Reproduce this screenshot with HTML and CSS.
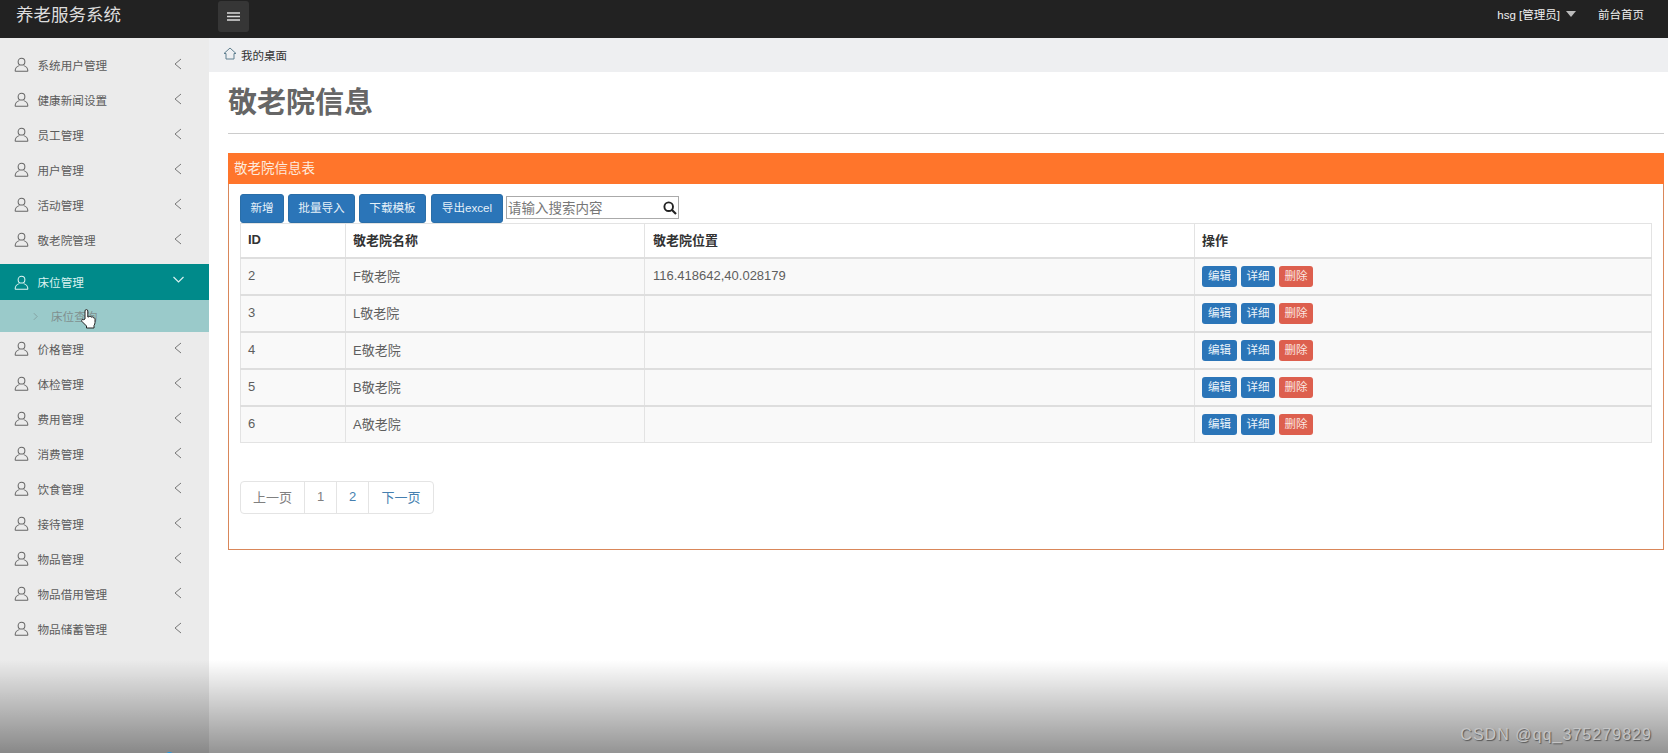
FILE: index.html
```html
<!DOCTYPE html>
<html lang="zh">
<head>
<meta charset="utf-8">
<title>养老服务系统</title>
<link rel="stylesheet" href="styles.css">
</head>
<body>
<svg class="sprites" width="0" height="0">
  <symbol id="user" viewBox="0 0 16 16"><circle cx="8" cy="5" r="3.6" fill="none" stroke="currentColor" stroke-width="1.1"/><path d="M1.2 15.2c0-3.6 2.4-5.4 4.4-6M14.8 15.2c0-3.6-2.4-5.4-4.4-6M1.2 15.2h13.6" fill="none" stroke="currentColor" stroke-width="1.1"/></symbol>
  <symbol id="left" viewBox="0 0 8 12"><path d="M7 1L1 6l6 5" fill="none" stroke="currentColor" stroke-width="1"/></symbol>
</svg>
<div class="app">
  <header class="topbar">
    <div class="brand">养老服务系统</div>
    <button class="toggle" type="button" aria-label="菜单">
      <svg width="13" height="9" viewBox="0 0 13 9"><path d="M0 1h13M0 4.500h13M0 8h13" stroke="#ddd" stroke-width="1.400"/></svg>
    </button>
    <div class="top-right">
      <span class="who">hsg [管理员]</span><span class="caret"></span>
      <span class="home-link">前台首页</span>
    </div>
  </header>
  <aside class="sidebar">
    <ul class="menu">
      <li class="item"><svg class="uicon"><use href="#user"/></svg><span class="label">系统用户管理</span><svg class="chev"><use href="#left"/></svg></li>
      <li class="item"><svg class="uicon"><use href="#user"/></svg><span class="label">健康新闻设置</span><svg class="chev"><use href="#left"/></svg></li>
      <li class="item"><svg class="uicon"><use href="#user"/></svg><span class="label">员工管理</span><svg class="chev"><use href="#left"/></svg></li>
      <li class="item"><svg class="uicon"><use href="#user"/></svg><span class="label">用户管理</span><svg class="chev"><use href="#left"/></svg></li>
      <li class="item"><svg class="uicon"><use href="#user"/></svg><span class="label">活动管理</span><svg class="chev"><use href="#left"/></svg></li>
      <li class="item"><svg class="uicon"><use href="#user"/></svg><span class="label">敬老院管理</span><svg class="chev"><use href="#left"/></svg></li>
      <li class="item active"><svg class="uicon"><use href="#user"/></svg><span class="label">床位管理</span><svg class="chev-down" viewBox="0 0 12 8"><path d="M1 1l5 5 5-5" fill="none" stroke="currentColor" stroke-width="1.2"/></svg></li>
      <li class="sub">
        <svg class="sub-chev" viewBox="0 0 6 10"><path d="M1 1l4 4-4 4" fill="none" stroke="currentColor" stroke-width="1"/></svg><span>床位查询</span>
        <svg class="hand" viewBox="0 0 16 22"><path d="M5 11V3a1.4 1.4 0 0 1 2.8 0v6l1 0a1.3 1.3 0 0 1 2.4.3 1.3 1.3 0 0 1 2.3.6c1-.2 1.5.5 1.5 1.4v3.2c0 1.200-.4 2-1 3v2.500H6.500V18L2 13.500c-1-1.200.4-2.700 1.700-1.800z" fill="#fff" stroke="#222" stroke-width="1"/></svg>
      </li>
      <li class="item"><svg class="uicon"><use href="#user"/></svg><span class="label">价格管理</span><svg class="chev"><use href="#left"/></svg></li>
      <li class="item"><svg class="uicon"><use href="#user"/></svg><span class="label">体检管理</span><svg class="chev"><use href="#left"/></svg></li>
      <li class="item"><svg class="uicon"><use href="#user"/></svg><span class="label">费用管理</span><svg class="chev"><use href="#left"/></svg></li>
      <li class="item"><svg class="uicon"><use href="#user"/></svg><span class="label">消费管理</span><svg class="chev"><use href="#left"/></svg></li>
      <li class="item"><svg class="uicon"><use href="#user"/></svg><span class="label">饮食管理</span><svg class="chev"><use href="#left"/></svg></li>
      <li class="item"><svg class="uicon"><use href="#user"/></svg><span class="label">接待管理</span><svg class="chev"><use href="#left"/></svg></li>
      <li class="item"><svg class="uicon"><use href="#user"/></svg><span class="label">物品管理</span><svg class="chev"><use href="#left"/></svg></li>
      <li class="item"><svg class="uicon"><use href="#user"/></svg><span class="label">物品借用管理</span><svg class="chev"><use href="#left"/></svg></li>
      <li class="item"><svg class="uicon"><use href="#user"/></svg><span class="label">物品储蓄管理</span><svg class="chev"><use href="#left"/></svg></li>
    </ul>
  </aside>
  <main class="main">
    <div class="crumb">
      <svg class="house" viewBox="0 0 14 13"><path d="M7 1L1 6.500h2V12h8V6.500h2z" fill="none" stroke="#5f7f8f" stroke-width="1"/></svg>
      <span>我的桌面</span>
    </div>
    <div class="content">
      <h1 class="title">敬老院信息</h1>
      <section class="panel">
        <div class="panel-head">敬老院信息表</div>
        <div class="panel-body">
          <div class="tools">
            <button class="btn" type="button">新增</button>
            <button class="btn" type="button">批量导入</button>
            <button class="btn" type="button">下载模板</button>
            <button class="btn" type="button">导出excel</button>
            <div class="search">
              <span class="ph">请输入搜索内容</span>
              <svg class="glass" viewBox="0 0 14 14"><circle cx="5.700" cy="5.700" r="4.300" fill="none" stroke="#222" stroke-width="1.900"/><path d="M9 9l4 4" stroke="#222" stroke-width="2.200"/></svg>
            </div>
          </div>
          <table class="grid">
            <colgroup><col class="c1"><col class="c2"><col class="c3"><col></colgroup>
            <thead><tr><th>ID</th><th>敬老院名称</th><th>敬老院位置</th><th>操作</th></tr></thead>
            <tbody>
              <tr><td>2</td><td>F敬老院</td><td>116.418642,40.028179</td><td><span class="mini">编辑</span><span class="mini">详细</span><span class="mini red">删除</span></td></tr>
              <tr><td>3</td><td>L敬老院</td><td></td><td><span class="mini">编辑</span><span class="mini">详细</span><span class="mini red">删除</span></td></tr>
              <tr><td>4</td><td>E敬老院</td><td></td><td><span class="mini">编辑</span><span class="mini">详细</span><span class="mini red">删除</span></td></tr>
              <tr><td>5</td><td>B敬老院</td><td></td><td><span class="mini">编辑</span><span class="mini">详细</span><span class="mini red">删除</span></td></tr>
              <tr><td>6</td><td>A敬老院</td><td></td><td><span class="mini">编辑</span><span class="mini">详细</span><span class="mini red">删除</span></td></tr>
            </tbody>
          </table>
          <div class="pager">
            <span class="pg pg-prev">上一页</span><span class="pg pg-num">1</span><span class="pg pg-num link">2</span><span class="pg pg-next link">下一页</span>
          </div>
        </div>
      </section>
    </div>
  </main>
  <div class="shade"></div>
  <div class="dot"></div>
  <div class="mark">CSDN @qq_375279829</div>
</div>
</body>
</html>
```
FILE: styles.css
```css
* { box-sizing: border-box; }
html, body { margin: 0; padding: 0; height: 100%; overflow: hidden; }
body { font-family: "Liberation Sans", "Noto Sans CJK SC", sans-serif; font-size: 13px; color: #555; background: #fff; }
.sprites { position: absolute; }
.app { position: relative; width: 1668px; height: 753px; overflow: hidden; display: grid; grid-template-columns: 209px 1fr; grid-template-rows: 38px 1fr; }

.topbar { grid-column: 1 / 3; background: #222; color: #ddd; display: flex; align-items: flex-start; }
.brand { width: 218px; padding: 3px 0 0 16px; font-size: 17.500px; line-height: 24px; color: #ddd; }
.toggle { width: 31px; height: 31px; margin-top: 1px; background: #363636; border: 0; border-radius: 3px; padding: 0; display: flex; align-items: center; justify-content: center; }
.top-right { margin-left: auto; padding: 7px 24px 0 0; display: flex; align-items: center; font-size: 11.500px; line-height: 16px; color: #f0f0f0; }
.caret { width: 0; height: 0; margin: -3px 0 0 6px; border-left: 5.500px solid transparent; border-right: 5.500px solid transparent; border-top: 6px solid #bbb; }
.home-link { margin-left: 22px; }

.sidebar { background: #ebebeb; padding-top: 10px; }
.menu { list-style: none; margin: 0; padding: 0; }
.item { height: 35px; display: flex; align-items: center; padding: 0 0 2px 14px; color: #5c5c5c; font-size: 11.600px; }
.uicon { width: 15px; height: 15px; color: #666; flex: none; }
.label { margin-left: 8.500px; width: 136.500px; }
.chev { width: 8px; height: 12px; color: #777; margin-top: -2px; }
.chev-down { width: 13px; height: 8px; color: #d8f0f0; margin: -4px 0 0 -2px; }
.item.active { background: #008a8a; color: #d9f2f0; height: 36px; margin-top: 6px; padding-bottom: 0; }
.item.active .uicon { color: #e0f5f3; }
.sub { position: relative; height: 32px; background: #9acaca; display: flex; align-items: center; padding-left: 33px; color: #808f8f; font-size: 11.600px; }
.sub-chev { width: 5px; height: 9px; margin-right: 13px; color: #7f9a9a; }
.hand { position: absolute; left: 80px; top: 8px; width: 16px; height: 22px; }

.main { display: flex; flex-direction: column; min-width: 0; }
.crumb { height: 34px; background: #eeeff1; display: flex; align-items: center; padding-left: 14px; color: #333; font-size: 11.500px; }
.house { width: 14px; height: 13px; margin-right: 4px; margin-top: -3px; }
.content { padding: 0 4px 0 19px; }
.title { margin: 0; height: 62px; border-bottom: 1px solid #ccc; padding-top: 11px; font-size: 29px; line-height: 40px; font-weight: bold; color: #666; }

.panel { margin-top: 19px; border: 1px solid #d9875a; border-top: 0; height: 397px; }
.panel-head { height: 31px; margin: 0 -1px; padding: 0 6px; background: #ff752b; color: #fdeadd; font-size: 13.500px; line-height: 31px; }
.panel-body { padding: 10px 11px 0 11px; }
.tools { display: flex; align-items: flex-start; height: 29px; }
.btn { height: 29px; padding: 0 0 3px; margin-right: 4px; border: 1px solid #2a6ea8; border-radius: 3px; background: #2b75b8; color: #e6f1f8; font: 11.600px "Liberation Sans", "Noto Sans CJK SC", sans-serif; width: 44px; }
.btn:nth-child(2), .btn:nth-child(3) { width: 67px; }
.btn:nth-child(4) { width: 72px; margin: 0 3px 0 1px; }
.search { width: 173px; height: 23px; margin-top: 2px; border: 1px solid #aaa; background: #fff; display: flex; align-items: center; padding: 0 1px 2px; color: #777; font-size: 13.500px; }
.ph { flex: 1; }
.glass { width: 14px; height: 14px; margin-top: 2px; }

.grid { width: 1412px; table-layout: fixed; border-collapse: collapse; }
.c1 { width: 105px; } .c2 { width: 299px; } .c3 { width: 550px; }
.grid th, .grid td { border: 1px solid #e3e3e3; padding: 0 7px 2px; text-align: left; vertical-align: middle; }
.grid th:nth-child(3), .grid td:nth-child(3) { padding-left: 8px; }
.grid th { height: 34px; padding-bottom: 1px; color: #333; font-weight: bold; font-size: 13px; border-bottom-width: 2px; border-bottom-color: #dedede; }
.grid td { height: 37px; background: #f9f9f9; color: #5e5e5e; border-bottom-color: #dedede; border-bottom-width: 2px; }
.grid tr:last-child td { border-bottom-width: 1px; border-bottom-color: #e3e3e3; }
.grid td:last-child { padding-bottom: 0; }
.mini { display: inline-block; width: 34px; height: 21px; margin-right: 4px; border-radius: 3px; background: #2b75b8; color: #eaf3fa; font-size: 11.500px; line-height: 20px; text-align: center; vertical-align: middle; }
.mini:first-child { width: 35px; }
.mini.red { background: #dd5f4e; color: #fbe6e0; }

.pager { display: flex; width: 194px; height: 33px; margin-top: 38px; border: 1px solid #e4e4e4; border-radius: 4px; }
.pg { display: flex; align-items: center; justify-content: center; padding-bottom: 2px; border-right: 1px solid #e4e4e4; color: #808080; font-size: 13px; }
.pg-prev { width: 64px; } .pg-num { width: 32px; }
.pg-next { flex: 1; border-right: 0; }
.link { color: #467fb0; }

.shade { position: absolute; left: 0; right: 0; top: 660px; bottom: 0; background: linear-gradient(to bottom, rgba(0,0,0,0), rgba(0,0,0,.42)); pointer-events: none; }
.dot { position: absolute; left: 165px; top: 752px; width: 9px; height: 9px; border-radius: 50%; background: #1e9be8; }
.mark { position: absolute; right: 16px; bottom: 9px; color: #c4c4c4; font-size: 16px; line-height: 18px; letter-spacing: 1.050px; text-shadow: 1px 1px 1px #555; }
```
